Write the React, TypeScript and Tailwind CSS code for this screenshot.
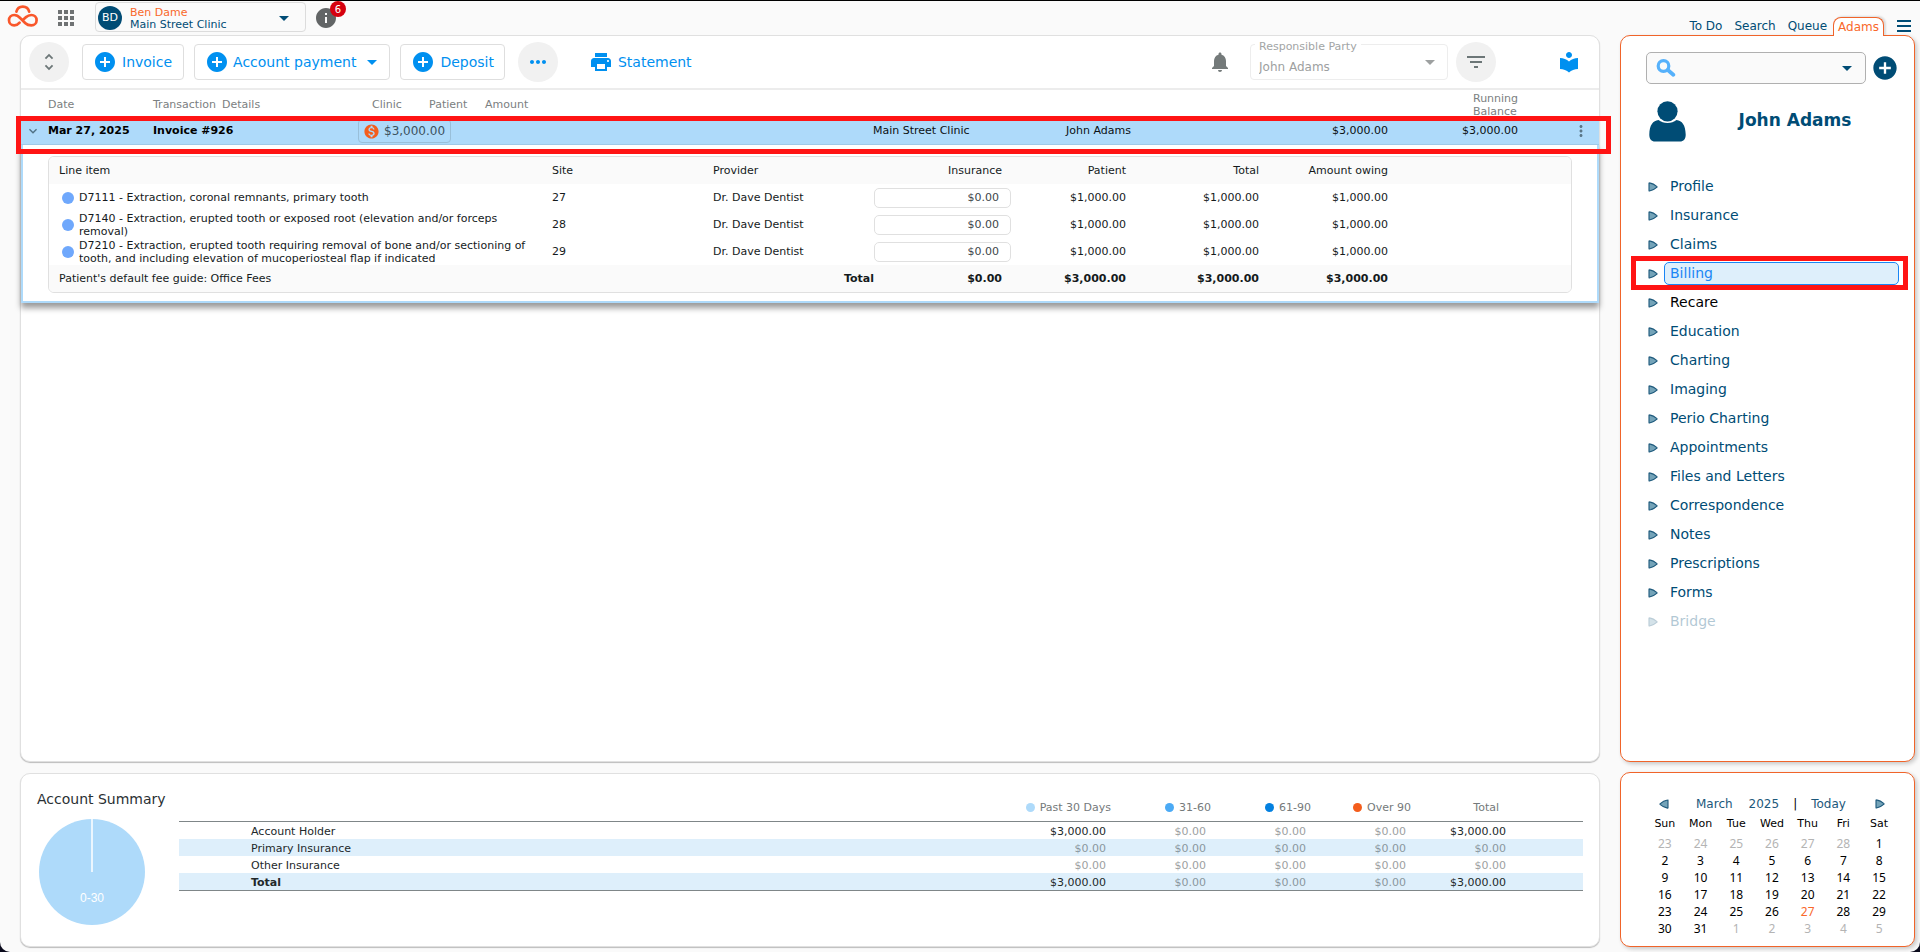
import React from "react";
import {
  MdAddCircle,
  MdApps,
  MdArrowDropDown,
  MdExpandMore,
  MdFilterList,
  MdInfo,
  MdLocalLibrary,
  MdMonetizationOn,
  MdMoreHoriz,
  MdMoreVert,
  MdNotifications,
  MdPrint,
  MdUnfoldMore,
} from "react-icons/md";

const lineItems = [
  { name: "D7111 - Extraction, coronal remnants, primary tooth", site: "27" },
  { name: "D7140 - Extraction, erupted tooth or exposed root (elevation and/or forceps removal)", site: "28" },
  {
    name: "D7210 - Extraction, erupted tooth requiring removal of bone and/or sectioning of tooth, and including elevation of mucoperiosteal flap if indicated",
    site: "29",
  },
];

const agingColumns = [
  { label: "Past 30 Days", dot: "bg-[#aedafa]" },
  { label: "31-60", dot: "bg-[#4baaf5]" },
  { label: "61-90", dot: "bg-[#0380e0]" },
  { label: "Over 90", dot: "bg-[#f45d1c]" },
];

const agingRows = [
  { label: "Account Holder", values: ["$3,000.00", "$0.00", "$0.00", "$0.00", "$3,000.00"] },
  { label: "Primary Insurance", values: ["$0.00", "$0.00", "$0.00", "$0.00", "$0.00"] },
  { label: "Other Insurance", values: ["$0.00", "$0.00", "$0.00", "$0.00", "$0.00"] },
  { label: "Total", values: ["$3,000.00", "$0.00", "$0.00", "$0.00", "$3,000.00"] },
];

const menu = [
  "Profile",
  "Insurance",
  "Claims",
  "Billing",
  "Recare",
  "Education",
  "Charting",
  "Imaging",
  "Perio Charting",
  "Appointments",
  "Files and Letters",
  "Correspondence",
  "Notes",
  "Prescriptions",
  "Forms",
  "Bridge",
];

const weekdays = ["Sun", "Mon", "Tue", "Wed", "Thu", "Fri", "Sat"];

const weeks = [
  [23, 24, 25, 26, 27, 28, 1],
  [2, 3, 4, 5, 6, 7, 8],
  [9, 10, 11, 12, 13, 14, 15],
  [16, 17, 18, 19, 20, 21, 22],
  [23, 24, 25, 26, 27, 28, 29],
  [30, 31, 1, 2, 3, 4, 5],
];

function Logo() {
  return (
    <svg width="32" height="24" viewBox="0 0 32 24" fill="none" stroke="#f9572b" strokeWidth="2.7" strokeLinecap="round">
      <path d="M12.6 18.7C11 20.6 9.4 21.4 7.2 21.4A5.2 5.2 0 0 1 7.2 11C9.6 11 11.4 12 13.2 14L18.4 19.2C20 20.8 21.8 21.4 24.4 21.4A5.2 5.2 0 0 0 24.4 11C22.2 11 20.4 11.9 18.6 13.4L16.6 15.3" />
      <path d="M9.4 7.6A6.6 6.6 0 0 1 22.2 7.6" />
    </svg>
  );
}

function Magnifier() {
  return (
    <svg width="20" height="18" viewBox="0 0 20 18" fill="none" stroke="#56b1fb" className="shrink-0">
      <circle cx="7.5" cy="7" r="5.300" strokeWidth="3.2" />
      <path d="M11.800 11L17.300 15.700" strokeWidth="3.800" strokeLinecap="round" />
    </svg>
  );
}

function Marker({ flip = false }: { flip?: boolean }) {
  return (
    <svg width="10" height="10" viewBox="0 0 10 10" className={flip ? "rotate-180" : ""}>
      <path d="M1 1.2Q1 .8 1.5 .9Q5.500 1.600 9 4.700Q9.200 5 9 5.200Q5.500 8.400 1.500 9Q1 9.100 1 8.600Z" fill="#74a3b8" stroke="#1c587b" strokeWidth="1.1" />
    </svg>
  );
}

function Person() {
  return (
    <svg width="37" height="41" viewBox="0 0 37 41" fill="#004c75">
      <circle cx="18.500" cy="10.300" r="10.100" />
      <path d="M9.500 19C12 21 15 22 18.500 22S25 21 27.500 19C33 19.500 36.500 24 36.700 33.500C36.800 38 34.500 40.500 31 40.500H6C2.500 40.500.200 38 .300 33.500C.500 24 4 19.500 9.500 19Z" />
    </svg>
  );
}

function Header() {
  return (
    <header className="flex h-[34px] items-start justify-between pl-[7px]">
      <div className="flex items-start">
        <a href="#home" aria-label="Home" className="mt-[3px]">
          <Logo />
        </a>
        <button aria-label="Apps" className="mt-[5px] ml-[15px] text-[#6f7273]">
          <MdApps size={24} />
        </button>
        <button className="mt-px ml-[17px] flex h-[30px] w-[211px] items-center rounded border border-[#dcdcdc] pt-[2px] pl-[2px] text-left">
          <span className="flex size-6 items-center justify-center rounded-full bg-[#004c75] text-[11px] text-white">BD</span>
          <span className="ml-2 flex-1 pt-[2px] text-[11px] leading-3 text-[#004c75]">
            <span className="block text-[#f9682b]">Ben Dame</span>
            <span className="block">Main Street Clinic</span>
          </span>
          <MdArrowDropDown size={24} className="mr-[9px] text-[#004c75]" />
        </button>
        <button aria-label="Notifications, 6 new" className="relative mt-[5px] ml-2 text-[#626566]">
          <MdInfo size={24} />
          <span className="absolute -top-[5px] -right-2 flex size-4 items-center justify-center rounded-full bg-[#d5000f] text-[10px] text-white">
            6
          </span>
        </button>
      </div>
      <nav className="flex items-end self-end pr-[9px] text-[12px] leading-[18px] text-[#004c75]">
        <a href="#todo" className="mr-3">To Do</a>
        <a href="#search" className="mr-3">Search</a>
        <a href="#queue" className="mr-[6px]">Queue</a>
        <a
          href="#adams"
          className="relative z-10 -mb-px rounded-t-lg border border-b-0 border-[#f0642a] bg-white px-1 text-[#f9682b] shadow-[2px_-1px_2px_rgba(0,0,0,0.12)]"
        >
          Adams
        </a>
        <button aria-label="Menu" className="mb-[3px] ml-[13px] flex flex-col gap-[3px]">
          <span className="block h-[2px] w-[14px] bg-[#004c75]" />
          <span className="block h-[2px] w-[14px] bg-[#004c75]" />
          <span className="block h-[2px] w-[14px] bg-[#004c75]" />
        </button>
      </nav>
    </header>
  );
}

function Toolbar() {
  return (
    <div className="flex h-[54px] items-center border-b-2 border-[#ececec] pr-[18px] pl-2 text-[14px] text-[#0090f0]">
      <button aria-label="Expand all" className="mr-[13px] flex size-10 items-center justify-center rounded-full bg-[#f1f1f1] text-[#6c7677]">
        <MdUnfoldMore size={22} />
      </button>
      <button className="mr-[10px] flex h-9 items-center gap-[5px] rounded border border-[#dedede] pr-[11px] pl-[10px]">
        <MdAddCircle size={24} />
        Invoice
      </button>
      <button className="mr-[10px] flex h-9 items-center gap-1 rounded border border-[#dedede] pr-[5px] pl-[10px]">
        <MdAddCircle size={24} />
        Account payment
        <MdArrowDropDown size={24} />
      </button>
      <button className="mr-[13px] flex h-9 items-center gap-[5px] rounded border border-[#dedede] pr-[10px] pl-[10px]">
        <MdAddCircle size={24} />
        Deposit
      </button>
      <button aria-label="More" className="mr-[31px] flex size-10 items-center justify-center rounded-full bg-[#f1f1f1]">
        <MdMoreHoriz size={24} />
      </button>
      <button className="flex items-center gap-[5px]">
        <MdPrint size={24} />
        Statement
      </button>
      <button aria-label="Alerts" className="mr-[18px] ml-auto text-[#747a7a]">
        <MdNotifications size={24} />
      </button>
      <div className="relative mr-2 flex h-9 w-[198px] items-center rounded border border-[#ededed]">
        <label htmlFor="party" className="absolute -top-[6px] left-1 bg-white px-1 text-[11px] leading-4 text-[#a2a5a5]">
          Responsible Party
        </label>
        <select id="party" disabled className="h-full w-full appearance-none bg-transparent pt-[10px] pl-2 text-[12px] text-[#9da0a0]">
          <option>John Adams</option>
        </select>
        <MdArrowDropDown size={24} className="pointer-events-none absolute top-[5px] right-[5px] text-[#9da0a0]" />
      </div>
      <button aria-label="Filter" className="mr-[61px] flex size-10 items-center justify-center rounded-full bg-[#f1f1f1] text-[#6c7677]">
        <MdFilterList size={24} />
      </button>
      <button aria-label="Help library">
        <MdLocalLibrary size={24} />
      </button>
    </div>
  );
}

function LineItems() {
  return (
    <div className="mx-[25px] mt-[11px] mb-2 overflow-hidden rounded-md border border-[#e0e0e0]">
      <table className="w-full table-fixed text-[11px] leading-[13px] text-[#151a1c]">
        <colgroup>
          <col />
          <col className="w-[161px]" />
          <col className="w-[161px]" />
          <col className="w-[137px]" />
          <col className="w-[115px]" />
          <col className="w-[133px]" />
          <col className="w-[129px]" />
          <col className="w-[183px]" />
        </colgroup>
        <thead>
          <tr className="h-[27px] bg-[#fafafa] text-right *:font-normal">
            <th className="pl-[10px] text-left">Line item</th>
            <th className="text-left">Site</th>
            <th className="text-left">Provider</th>
            <th className="pr-[9px]">Insurance</th>
            <th>Patient</th>
            <th>Total</th>
            <th>Amount owing</th>
            <td />
          </tr>
        </thead>
        <tbody>
          {lineItems.map((item) => (
            <tr key={item.site} className="h-[27px] text-right">
              <td className="pr-3 pl-[13px] text-left">
                <div className="flex items-center gap-[5px]">
                  <span className="size-3 shrink-0 rounded-full bg-[#6fa8fc]" />
                  <span>{item.name}</span>
                </div>
              </td>
              <td className="text-left">{item.site}</td>
              <td className="text-left">Dr. Dave Dentist</td>
              <td>
                <input
                  aria-label={`Insurance for site ${item.site}`}
                  defaultValue="$0.00"
                  className="block h-5 w-full rounded-[5px] border border-[#e0e0e0] pr-[11px] text-right text-[#40474a]"
                />
              </td>
              <td>$1,000.00</td>
              <td>$1,000.00</td>
              <td>$1,000.00</td>
              <td />
            </tr>
          ))}
        </tbody>
        <tfoot>
          <tr className="h-[27px] bg-[#fafafa] text-right font-bold">
            <td colSpan={2} className="pl-[10px] text-left font-normal">Patient's default fee guide: Office Fees</td>
            <td>Total</td>
            <td className="pr-[9px]">$0.00</td>
            <td>$3,000.00</td>
            <td>$3,000.00</td>
            <td>$3,000.00</td>
            <td />
          </tr>
        </tfoot>
      </table>
    </div>
  );
}

function Ledger() {
  return (
    <section className="flex flex-1 flex-col rounded-[10px] border border-[#e0e0e0] bg-white shadow-[0_1px_1px_rgba(0,0,0,0.25)]">
      <Toolbar />
      <div className="flex h-[27px] items-center pt-[2px] pl-[27px] text-[11px] leading-[13px] text-[#7b8081]">
        <span className="w-[105px]">Date</span>
        <span className="w-[69px]">Transaction</span>
        <span className="w-[150px]">Details</span>
        <span className="w-[57px]">Clinic</span>
        <span className="w-[56px]">Patient</span>
        <span>Amount</span>
        <span className="mr-[66px] ml-auto w-[60px]">Running Balance</span>
      </div>
      <div className="relative grid h-7 grid-cols-[27px_105px_205px_1fr_193px_192px_130px_130px_81px] items-center border-b border-[#9fc9e8] bg-[#aedafa] pt-px text-[11px] text-[#0b1114]">
        <button aria-label="Collapse invoice" className="ml-1 justify-self-start text-[#4f7184]">
          <MdExpandMore size={16} />
        </button>
        <span className="font-bold text-black">Mar 27, 2025</span>
        <span className="font-bold text-black">Invoice #926</span>
        <button className="flex h-6 items-center justify-self-start rounded border border-[#99bfd9] pr-[5px] pl-1 text-[12px] text-[#3c525f]">
          <MdMonetizationOn size={17} className="mr-1 text-[#f45d1c]" />
          $3,000.00
        </button>
        <span>Main Street Clinic</span>
        <span>John Adams</span>
        <span className="text-right">$3,000.00</span>
        <span className="text-right">$3,000.00</span>
        <button aria-label="Invoice actions" className="mr-[9px] justify-self-end text-[#5a7687]">
          <MdMoreVert size={18} />
        </button>
        <div className="pointer-events-none absolute -top-px -right-3 -bottom-[10px] -left-[5px] z-10 border-5 border-[#ff1414]" />
      </div>
      <div className="border-2 border-t-0 border-[#aedafa] shadow-[0_5px_6px_rgba(0,0,0,0.4)]">
        <LineItems />
      </div>
    </section>
  );
}

function AccountSummary() {
  return (
    <section className="flex min-h-[174px] rounded-[10px] border border-[#e0e0e0] bg-white pt-[15px] pr-4 pl-4 shadow-[0_1px_1px_rgba(0,0,0,0.25)]">
      <div className="w-[142px] shrink-0">
        <h2 className="text-[14px] leading-5 text-[#2a3033]">Account Summary</h2>
        <svg width="108" height="108" viewBox="0 0 108 108" className="mt-[9px] ml-px">
          <circle cx="54" cy="54" r="53" fill="#aedafa" />
          <path d="M54 0V54" stroke="#fff" strokeWidth="1.500" />
          <text x="54" y="84" textAnchor="middle" fill="#fff" fontSize="12" fontFamily="Liberation Sans, sans-serif">
            0-30
          </text>
        </svg>
      </div>
      <table className="mt-1 w-full table-fixed self-start text-[11px] leading-[15px]">
        <colgroup>
          <col />
          <col className="w-[100px]" />
          <col className="w-[100px]" />
          <col className="w-[100px]" />
          <col className="w-[100px]" />
          <col className="w-[100px]" />
          <col className="w-[72px]" />
        </colgroup>
        <thead>
          <tr className="h-7 border-b border-[#7f8688] text-right text-[#757a7b] *:pt-[2px] *:font-normal">
            <td />
            {agingColumns.map((col) => (
              <th key={col.label}>
                <span className="flex items-center justify-end gap-[5px]">
                  <span className={`size-[9px] rounded-full ${col.dot}`} />
                  {col.label}
                </span>
              </th>
            ))}
            <th className="pr-3">Total</th>
            <td />
          </tr>
        </thead>
        <tbody className="border-b border-[#7f8688]">
          {agingRows.map((row) => (
            <tr key={row.label} className="h-[17px] text-right text-[#22282a] *:pt-[2px] even:bg-[#deeffb]">
              <th className={`pl-[72px] text-left ${row.label === "Total" ? "font-bold" : "font-normal"}`}>{row.label}</th>
              {row.values.map((value, i) => (
                <td key={i} className={`pr-[5px] ${value === "$0.00" ? "opacity-45" : ""}`}>
                  {value}
                </td>
              ))}
              <td />
            </tr>
          ))}
        </tbody>
      </table>
    </section>
  );
}

function PatientPanel() {
  return (
    <aside className="flex-1 rounded-[10px] border border-[#f0642a] bg-white pb-24 shadow-[2px_2px_4px_rgba(0,0,0,0.2)]">
      <div className="flex items-center pt-4 pr-[15px] pl-[25px]">
        <div className="flex h-8 min-w-0 flex-1 items-center rounded-[5px] border border-[#b0b0b0] bg-[#fafafa] pr-[6px] pl-[9px]">
          <Magnifier />
          <input aria-label="Search patients" className="min-w-0 flex-1 bg-transparent px-2 text-[13px] outline-none" />
          <MdArrowDropDown size={24} className="shrink-0 text-[#004c75]" />
        </div>
        <button aria-label="Add patient" className="ml-[5px] shrink-0 text-[#004c75]">
          <MdAddCircle size={28} />
        </button>
      </div>
      <div className="mt-[17px] flex items-center pl-7">
        <Person />
        <h1 className="flex-1 pr-[10px] pb-[2px] text-center text-[17px] font-bold text-[#004c75]">John Adams</h1>
      </div>
      <ul className="mt-[30px] pr-[15px] pl-[27px] text-[14px]">
        {menu.map((item) => (
          <li key={item} className={`relative flex h-[29px] items-center gap-[6px] ${item === "Bridge" ? "opacity-30" : ""}`}>
            <Marker />
            <a
              href="#section"
              className={`flex-1 rounded-[5px] border pl-[5px] leading-[21px] ${
                item === "Billing"
                  ? "border-[#1a86f5] bg-[#deeffb] text-[#1a86f5]"
                  : item === "Recare"
                    ? "border-transparent text-black"
                    : "border-transparent text-[#004c75]"
              }`}
            >
              {item}
            </a>
            {item === "Billing" && (
              <div className="pointer-events-none absolute -top-[3px] -right-[9px] -bottom-[2px] -left-[17px] border-5 border-[#ff1414]" />
            )}
          </li>
        ))}
      </ul>
    </aside>
  );
}

function Calendar() {
  return (
    <section className="min-h-[175px] rounded-[10px] border border-[#f0642a] bg-white pt-[21px] pr-[17px] pl-[26px] shadow-[2px_2px_4px_rgba(0,0,0,0.2)]">
      <div className="flex h-5 items-center pr-3 pl-3 text-[12px] text-[#1c587b]">
        <button aria-label="Previous month">
          <Marker flip />
        </button>
        <button className="ml-[27px]">March</button>
        <button className="ml-4">2025</button>
        <span className="ml-[14px] text-black">|</span>
        <button className="ml-[14px]">Today</button>
        <button aria-label="Next month" className="ml-auto">
          <Marker />
        </button>
      </div>
      <table className="w-full table-fixed text-center">
        <thead>
          <tr className="h-[21px] text-[11px] *:font-normal">
            {weekdays.map((day) => (
              <th key={day}>{day}</th>
            ))}
          </tr>
        </thead>
        <tbody className="font-['Noto_Sans',sans-serif] text-[12px] leading-[17px]">
          {weeks.map((week, w) => (
            <tr key={w}>
              {week.map((day, d) => {
                const outside = (w === 0 && day > 7) || (w === 5 && day < 7);
                const today = w === 4 && day === 27;
                return (
                  <td key={d} className={outside ? "text-[#b4b4b4]" : today ? "text-[#f9682b]" : "text-black"}>
                    {day}
                  </td>
                );
              })}
            </tr>
          ))}
        </tbody>
      </table>
    </section>
  );
}

export default function App() {
  return (
    <div className="flex min-h-screen bg-[#0a0a1c] font-['DejaVu_Sans',Verdana,sans-serif]">
      <div className="flex flex-1 flex-col rounded-b-[10px] border-t border-black bg-[#fafafa]">
        <Header />
        <main className="flex flex-1 gap-5 pr-[5px] pb-[5px] pl-5">
          <div className="flex min-w-0 flex-1 flex-col gap-[11px]">
            <Ledger />
            <AccountSummary />
          </div>
          <div className="flex w-[295px] shrink-0 flex-col gap-[10px]">
            <PatientPanel />
            <Calendar />
          </div>
        </main>
      </div>
    </div>
  );
}
